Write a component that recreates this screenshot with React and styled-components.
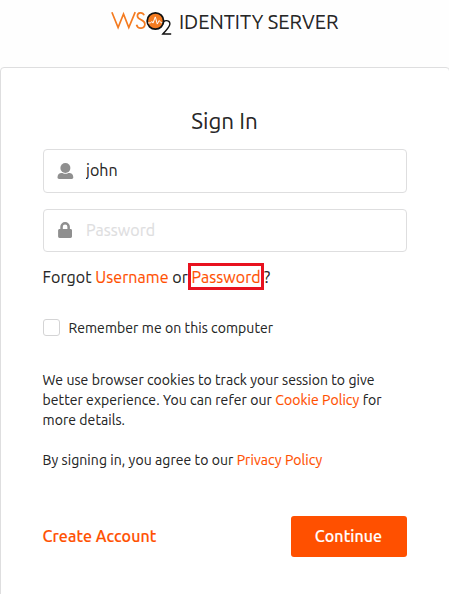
import React from "react";
import styled, { createGlobalStyle } from "styled-components";

const GlobalStyle = createGlobalStyle`
  * { box-sizing: border-box; }
  body {
    margin: 0;
    background: #fefefe;
    color: rgba(0, 0, 0, 0.87);
    font-family: Ubuntu, "Noto Sans", sans-serif;
    -webkit-text-stroke: 0.15px;
    overflow: hidden;
  }
`;

const Page = styled.div`
  display: flex;
  flex-direction: column;
  width: 450px;
  height: 594px;
  overflow: hidden;
`;

const Header = styled.header`
  display: flex;
  flex: 0 0 67px;
  align-items: flex-start;
  padding: 8px 0 0 111px;
`;

const Logo = styled.svg`
  flex: none;
  width: 62px;
  height: 30px;
`;

const Product = styled.span`
  margin-left: 6px;
  font-size: 20px;
  line-height: 28px;
  white-space: nowrap;
`;

const Card = styled.main`
  flex: none;
  height: 560px;
  padding: 37px 42px 0;
  border: 1px solid #dededf;
  border-radius: 4px;
  background: #fff;
`;

const Title = styled.h1`
  margin: 0 0 12px;
  padding-right: 1px;
  font-size: 22.4px;
  font-weight: 400;
  line-height: 32px;
  text-align: center;
`;

const Field = styled.label`
  display: flex;
  align-items: center;
  width: 364px;
  height: ${(p) => p.$height}px;
  margin-bottom: 16px;
  padding-left: 12.5px;
  border: 1px solid #dededf;
  border-radius: 4px;

  svg {
    flex: none;
    width: 17px;
    height: 18px;
    fill: #8f8f8f;
  }
`;

const Input = styled.input`
  width: 300px;
  margin-left: 12.5px;
  padding: 0 0 2px;
  border: 0;
  outline: 0;
  background: none;
  color: rgba(0, 0, 0, 0.87);
  font: 16px/24px Ubuntu, "Noto Sans", sans-serif;
  letter-spacing: 0.06px;

  &::placeholder {
    color: #dededf;
    opacity: 1;
  }
`;

const Text = styled.span`
  display: block;
  letter-spacing: 0.07px;
  white-space: pre;
`;

const Recovery = styled.div`
  display: flex;
  align-items: center;
  height: 27px;
  margin: -5px 0 0 -0.5px;
  font-size: 16px;
`;

const Link = styled.a`
  color: #ff5000;
  text-decoration: none;
`;

const Highlight = styled.span`
  display: flex;
  align-items: center;
  width: 76px;
  height: 27px;
  padding-left: 0.5px;
  border: 3px solid #e8121f;
`;

const Remember = styled.label`
  display: flex;
  align-items: center;
  height: 17px;
  margin-top: 29px;
  font-size: 14px;
`;

const Checkbox = styled.input`
  appearance: none;
  width: 17px;
  height: 17px;
  margin: 0 8.4px 0 0;
  border: 1px solid #d4d4d5;
  border-radius: 3px;
  background: #fff;
`;

const Notice = styled.p`
  margin: ${(p) => p.$top}px 0 0 -0.5px;
  font-size: 14px;
  line-height: 20px;
`;

const Actions = styled.div`
  display: flex;
  align-items: center;
  justify-content: space-between;
  width: 364px;
  margin-top: 46px;
`;

const CreateLink = styled(Link)`
  margin-left: -0.5px;
  padding-bottom: 1px;
  font-size: 16px;
  font-weight: 500;
`;

const Button = styled.button`
  display: flex;
  align-items: center;
  justify-content: center;
  width: 116px;
  height: 41px;
  padding: 0 1px 1px 0;
  border: 0;
  border-radius: 3px;
  background: #ff5000;
  color: #fff;
  font: 500 16px/24px Ubuntu, "Noto Sans", sans-serif;
`;

function WsoLogo() {
  return (
    <Logo viewBox="0 0 62 30" role="img" aria-label="WSO2">
      <g fill="none" stroke="#f47b20" strokeWidth="1.7">
        <path d="M.9 4.2 7.1 19.5 12.5 6 17.8 19.5 24.2 4.2" strokeLinejoin="miter" />
        <path d="M33.1 7.2C31.8 3.8 26.3 4 26.4 8c.1 4.3 7.5 3.4 7.5 8.1 0 4.9-7 5.6-8.4.6" />
      </g>
      <circle cx="44.4" cy="13" r="8.2" fill="#f47b20" stroke="#111" strokeWidth="1.8" />
      <path d="M37 14.9h2.6l1.3-1.5 1.1 1.7 2.3-6.2 2 7.2 1.9-3.6 1.9 2.3h1.7" fill="none" stroke="#fff" strokeWidth="1" />
      <path d="M51.8 16.3c.1-4.9 7.1-4.8 7.1-.5 0 3.8-4.3 6.6-7.1 10.2H60.2" fill="none" stroke="#111" strokeWidth="1.4" />
    </Logo>
  );
}

function UserIcon() {
  return (
    <svg viewBox="0 0 17 18">
      <circle cx="8.4" cy="6" r="5" />
      <path d="M.5 15.2c0-2.6 1.7-4.2 4.1-4.2 1.4 0 2 .8 3.8.8s2.4-.8 3.8-.8c2.4 0 4.1 1.6 4.1 4.2 0 1-.6 1.7-1.6 1.7H2.1c-1 0-1.6-.7-1.6-1.7Z" />
    </svg>
  );
}

function LockIcon() {
  return (
    <svg viewBox="0 1 17 18">
      <path
        fillRule="evenodd"
        d="M3.3 8V5.8a4.8 4.8 0 0 1 9.6 0V8h.6c1 0 1.5.6 1.5 1.5v5.8c0 1-.6 1.6-1.5 1.6H2.6c-.9 0-1.5-.6-1.5-1.6V9.5C1.1 8.6 1.7 8 2.6 8Zm2.5 0h4.6V5.8a2.3 2.3 0 0 0-4.6 0Z"
      />
    </svg>
  );
}

export default function App() {
  return (
    <>
      <GlobalStyle />
      <Page>
        <Header>
          <WsoLogo />
          <Product>IDENTITY SERVER</Product>
        </Header>
        <Card>
          <Title>Sign In</Title>
          <Field $height={44}>
            <UserIcon />
            <Input aria-label="Username" defaultValue="john" />
          </Field>
          <Field $height={43}>
            <LockIcon />
            <Input aria-label="Password" type="password" placeholder="Password" />
          </Field>
          <Recovery>
            <Text>
              Forgot <Link href="#username">Username</Link> or
            </Text>
            <Highlight>
              <Link href="#password"><Text>Password</Text></Link>
            </Highlight>
            <Text>?</Text>
          </Recovery>
          <Remember>
            <Checkbox type="checkbox" />
            <Text>Remember me on this computer</Text>
          </Remember>
          <Notice $top={34}>
            <Text>We use browser cookies to track your session to give</Text>
            <Text>better experience. You can refer our <Link href="#cookies">Cookie Policy</Link> for</Text>
            <Text>more details.</Text>
          </Notice>
          <Notice $top={20}>
            <Text>By signing in, you agree to our <Link href="#privacy">Privacy Policy</Link></Text>
          </Notice>
          <Actions>
            <CreateLink href="#create"><Text>Create Account</Text></CreateLink>
            <Button type="button"><Text>Continue</Text></Button>
          </Actions>
        </Card>
      </Page>
    </>
  );
}
